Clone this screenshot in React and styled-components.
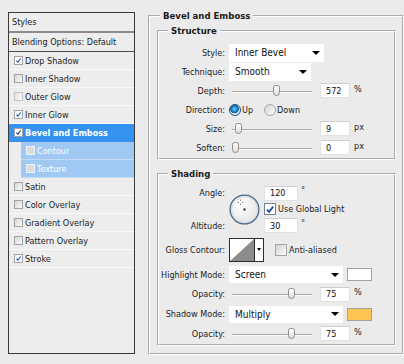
import styled, { createGlobalStyle } from "styled-components";

const GlobalStyle = createGlobalStyle`
  html, body {
    margin: 0;
    background: #ebebeb;
  }
  body {
    font-family: "DejaVu Sans Condensed", "Liberation Sans", Arial, sans-serif;
    font-size: 9px;
    color: #1c1c1c;
  }
`;

const items = [
  { name: "Drop Shadow", checked: true },
  { name: "Inner Shadow" },
  { name: "Outer Glow", faint: true },
  { name: "Inner Glow", checked: true },
  { name: "Bevel and Emboss", checked: true, selected: true },
  { name: "Contour", sub: true },
  { name: "Texture", sub: true },
  { name: "Satin" },
  { name: "Color Overlay" },
  { name: "Gradient Overlay" },
  { name: "Pattern Overlay" },
  { name: "Stroke", checked: true },
];

function Tick({ size = 9, color = "#1f4fa3", width = 1.4 }) {
  return (
    <svg width={size} height={size} viewBox="0 0 9 9">
      <path d="M1.8 4.6 L3.7 6.6 L7.3 1.9" fill="none" stroke={color} strokeWidth={width} />
    </svg>
  );
}

function Slider({ value }) {
  return (
    <Track>
      <Thumb style={{ left: `${value * 72}px` }} />
    </Track>
  );
}

function AngleDial() {
  return (
    <svg width="31" height="31" viewBox="0 0 31 31">
      <defs>
        <radialGradient id="dialFill" cx="40%" cy="35%" r="70%">
          <stop offset="0" stopColor="#ffffff" />
          <stop offset="1" stopColor="#e2e2e2" />
        </radialGradient>
      </defs>
      <circle cx="15.5" cy="15.5" r="14.4" fill="url(#dialFill)" stroke="#4d6887" strokeWidth="1.3" />
      <circle cx="15.5" cy="15.5" r="13" fill="none" stroke="#c9d3de" strokeWidth="0.8" />
      <rect x="14.5" y="14.5" width="2" height="2" fill="#111" />
      <path d="M11.5 5.5 v1.5 M11.5 9.5 v1.5 M8.5 8.5 h1.5 M13 8.5 h1.5" stroke="#8a8a8a" strokeWidth="1" />
    </svg>
  );
}

function App() {
  return (
    <>
      <GlobalStyle />
      <Page>
        <StylesPanel>
          <PanelHeader>Styles</PanelHeader>
          <BlendingRow>Blending Options: Default</BlendingRow>
          {items.map((it) => (
            <StyleItem key={it.name} $selected={it.selected} $sub={it.sub}>
              <ListBox $checked={it.checked} $sub={it.sub} $faint={it.faint}>
                {it.checked && <Tick color={it.selected ? "#16336e" : "#2456b8"} />}
              </ListBox>
              {it.name}
            </StyleItem>
          ))}
        </StylesPanel>

        <OuterGroup>
          <GroupTitle>Bevel and Emboss</GroupTitle>
          <InnerGroup>
            <GroupTitle $inner>Structure</GroupTitle>
            <FormRow>
              <Label>Style:</Label>
              <Controls>
                <Select $w={95}>
                  Inner Bevel
                  <Arrow />
                </Select>
              </Controls>
            </FormRow>
            <FormRow>
              <Label>Technique:</Label>
              <Controls>
                <Select $w={82}>
                  Smooth
                  <Arrow />
                </Select>
              </Controls>
            </FormRow>
            <FormRow>
              <Label>Depth:</Label>
              <Controls>
                <Slider value={0.57} />
                <NumberBox>572</NumberBox>
                <Unit>%</Unit>
              </Controls>
            </FormRow>
            <FormRow>
              <Label>Direction:</Label>
              <Controls>
                <RadioOption>
                  <Radio $on />
                  Up
                </RadioOption>
                <RadioOption>
                  <Radio />
                  Down
                </RadioOption>
              </Controls>
            </FormRow>
            <FormRow>
              <Label>Size:</Label>
              <Controls>
                <Slider value={0.04} />
                <NumberBox>9</NumberBox>
                <Unit>px</Unit>
              </Controls>
            </FormRow>
            <FormRow>
              <Label>Soften:</Label>
              <Controls>
                <Slider value={0} />
                <NumberBox>0</NumberBox>
                <Unit>px</Unit>
              </Controls>
            </FormRow>
          </InnerGroup>

          <InnerGroup $shading>
            <GroupTitle $inner>Shading</GroupTitle>
            <AngleBlock>
              <Cell $row="1" $col="1">
                <Label>Angle:</Label>
              </Cell>
              <Cell $row="1 / 4" $col="2">
                <AngleDial />
              </Cell>
              <Cell $row="1" $col="3">
                <NumberBox $w={34}>120</NumberBox>
                <Degree>°</Degree>
              </Cell>
              <Cell $row="2" $col="3">
                <CheckOption>
                  <Box $checked>
                    <Tick size={11} color="#2246a8" width={1.6} />
                  </Box>
                  Use Global Light
                </CheckOption>
              </Cell>
              <Cell $row="3" $col="1">
                <Label>Altitude:</Label>
              </Cell>
              <Cell $row="3" $col="3">
                <NumberBox $w={34}>30</NumberBox>
                <Degree>°</Degree>
              </Cell>
            </AngleBlock>
            <FormRow $h={31}>
              <Label>Gloss Contour:</Label>
              <Controls>
                <ContourPicker>
                  <ContourThumb>
                    <svg width="24" height="22" viewBox="0 0 24 22">
                      <polygon points="0,22 24,0 24,22" fill="#8c8c8c" />
                    </svg>
                  </ContourThumb>
                  <ContourDrop>
                    <SmallArrow />
                  </ContourDrop>
                </ContourPicker>
                <CheckOption $ml={11}>
                  <Box />
                  Anti-aliased
                </CheckOption>
              </Controls>
            </FormRow>
            <FormRow>
              <Label>Highlight Mode:</Label>
              <Controls>
                <Select $w={114} $h={17}>
                  Screen
                  <Arrow />
                </Select>
                <Swatch $color="#ffffff" />
              </Controls>
            </FormRow>
            <FormRow $h={20}>
              <Label>Opacity:</Label>
              <Controls>
                <Slider value={0.78} />
                <NumberBox>75</NumberBox>
                <Unit>%</Unit>
              </Controls>
            </FormRow>
            <FormRow $h={20}>
              <Label>Shadow Mode:</Label>
              <Controls>
                <Select $w={114} $h={17}>
                  Multiply
                  <Arrow />
                </Select>
                <Swatch $color="#ffc553" />
              </Controls>
            </FormRow>
            <FormRow>
              <Label>Opacity:</Label>
              <Controls>
                <Slider value={0.78} />
                <NumberBox>75</NumberBox>
                <Unit>%</Unit>
              </Controls>
            </FormRow>
          </InnerGroup>
        </OuterGroup>
      </Page>
    </>
  );
}

const Page = styled.div`
  width: 404px;
  height: 364px;
  box-sizing: border-box;
  padding: 10px 0 0 8px;
  display: flex;
  align-items: flex-start;
  gap: 13px;
`;

const StylesPanel = styled.div`
  margin-top: 2px;
  width: 127px;
  height: 342px;
  box-sizing: border-box;
  border: 1px solid #3a3a3a;
  background: #ededed;
  display: flex;
  flex-direction: column;
`;

const PanelHeader = styled.div`
  height: 18px;
  padding-left: 3px;
  display: flex;
  align-items: center;
  border-bottom: 2px solid #8b8b8b;
`;

const BlendingRow = styled.div`
  height: 18px;
  padding-left: 3px;
  display: flex;
  align-items: center;
  border-bottom: 1px solid #4b4b4b;
`;

const StyleItem = styled.div`
  height: 17px;
  margin-left: ${(p) => (p.$sub ? "12px" : "0")};
  padding-left: 5px;
  display: flex;
  align-items: center;
  gap: 2px;
  border-bottom: 1px solid
    ${(p) => (p.$selected ? "#3592ee" : p.$sub ? "#c3dcf6" : "#f9f9f9")};
  background: ${(p) => (p.$selected ? "#3592ee" : p.$sub ? "#9fc8f2" : "transparent")};
  color: ${(p) => (p.$selected || p.$sub ? "#ffffff" : "#1c1c1c")};
  font-weight: ${(p) => (p.$selected ? "bold" : "normal")};
`;

const ListBox = styled.span`
  flex: none;
  width: 9px;
  height: 9px;
  box-sizing: border-box;
  display: flex;
  align-items: center;
  justify-content: center;
  border: 1px solid ${(p) => (p.$sub ? "#eef4fb" : p.$faint ? "#c4c4c4" : "#a3a3a3")};
  background: ${(p) =>
    p.$checked
      ? "#ffffff"
      : p.$sub
      ? "#dcdcdc"
      : p.$faint
      ? "linear-gradient(135deg, #e2e2e2, #fbfbfb)"
      : "linear-gradient(135deg, #d6d6d6, #fbfbfb)"};
  svg {
    display: block;
  }
`;

const OuterGroup = styled.fieldset`
  margin: 0;
  min-width: 0;
  width: 256px;
  height: 345px;
  box-sizing: border-box;
  border: 2px groove #ffffff;
  padding: 3px 6px 0 7px;
`;

const InnerGroup = styled.fieldset`
  margin: ${(p) => (p.$shading ? "8px 0 0" : "0")};
  min-width: 0;
  box-sizing: border-box;
  border: 2px groove #ffffff;
  padding: ${(p) => (p.$shading ? "5px 0 1px 0" : "6px 0 1px 0")};
`;

const GroupTitle = styled.legend`
  padding: 0 3px;
  margin-left: ${(p) => (p.$inner ? "9px" : "3px")};
  font-weight: bold;
  font-size: 9.5px;
  line-height: 12px;
  color: #1a1a1a;
`;

const FormRow = styled.div`
  display: grid;
  grid-template-columns: 66px auto;
  column-gap: 4px;
  align-items: center;
  height: ${(p) => p.$h || 19}px;
`;

const Label = styled.span`
  text-align: right;
  white-space: nowrap;
`;

const Controls = styled.div`
  display: flex;
  align-items: center;
`;

const Select = styled.div`
  width: ${(p) => p.$w}px;
  height: ${(p) => p.$h || 18}px;
  box-sizing: border-box;
  padding: 0 4px 0 6px;
  background: #ffffff;
  display: flex;
  align-items: center;
  justify-content: space-between;
  font-size: 10px;
  color: #111;
`;

const Arrow = styled.span`
  width: 0;
  height: 0;
  border-left: 4px solid transparent;
  border-right: 4px solid transparent;
  border-top: 4px solid #000;
`;

const Track = styled.div`
  position: relative;
  margin-left: 3px;
  width: 80px;
  height: 12px;
  &::before {
    content: "";
    position: absolute;
    left: 0;
    right: 0;
    top: 6px;
    height: 1px;
    background: #a9a9a9;
    box-shadow: 0 1px 0 #fafafa;
  }
`;

const Thumb = styled.span`
  position: absolute;
  top: 0;
  width: 7px;
  height: 11px;
  box-sizing: border-box;
  border: 1px solid #8c8c8c;
  border-radius: 3px 3px 4px 4px;
  background: linear-gradient(#ffffff, #dedede);
`;

const NumberBox = styled.div`
  margin-left: 8px;
  width: ${(p) => p.$w || 30}px;
  height: 15px;
  box-sizing: border-box;
  padding-left: 5px;
  display: flex;
  align-items: center;
  background: #ffffff;
  border: 1px solid #e1e1e1;
  border-top-color: #cfcfcf;
  color: #111;
`;

const Unit = styled.span`
  margin-left: 4px;
  margin-top: -4px;
`;

const Degree = styled.span`
  margin-left: 3px;
  margin-top: -6px;
`;

const RadioOption = styled.span`
  display: flex;
  align-items: center;
  gap: 1px;
  margin-right: 11px;
`;

const Radio = styled.span`
  width: 12px;
  height: 12px;
  box-sizing: border-box;
  border-radius: 50%;
  border: 1px solid ${(p) => (p.$on ? "#1e4f7c" : "#a9a9a9")};
  background: ${(p) =>
    p.$on
      ? "radial-gradient(circle at 45% 40%, #7fd2ff 0, #1d8fd6 2.5px, #0f5d99 4px, #dbe8f2 4.6px)"
      : "linear-gradient(135deg, #d4d4d4, #fdfdfd)"};
`;

const AngleBlock = styled.div`
  display: grid;
  grid-template-columns: 66px 31px auto;
  grid-template-rows: 16px 16px 17px;
  column-gap: 4px;
  align-items: center;
`;

const Cell = styled.div`
  grid-row: ${(p) => p.$row};
  grid-column: ${(p) => p.$col};
  display: flex;
  align-items: center;
  justify-content: ${(p) => (p.$col === "1" ? "flex-end" : "flex-start")};
  ${NumberBox} {
    margin-left: 0;
  }
  svg {
    display: block;
  }
`;

const CheckOption = styled.span`
  display: flex;
  align-items: center;
  gap: 2px;
  margin-left: ${(p) => p.$ml || 0}px;
`;

const Box = styled.span`
  width: 12px;
  height: 12px;
  box-sizing: border-box;
  display: flex;
  align-items: center;
  justify-content: center;
  border: 1px solid ${(p) => (p.$checked ? "#6f839a" : "#a5a5a5")};
  background: ${(p) =>
    p.$checked ? "#ffffff" : "linear-gradient(135deg, #d2d2d2, #fafafa)"};
`;

const ContourPicker = styled.div`
  width: 35px;
  height: 24px;
  box-sizing: border-box;
  border: 1px solid #2c2c2c;
  display: flex;
  background: #ffffff;
`;

const ContourThumb = styled.div`
  width: 24px;
  svg {
    display: block;
  }
`;

const ContourDrop = styled.div`
  flex: 1;
  border-left: 1px solid #2c2c2c;
  display: flex;
  align-items: center;
  justify-content: center;
`;

const SmallArrow = styled.span`
  width: 0;
  height: 0;
  border-left: 2px solid transparent;
  border-right: 2px solid transparent;
  border-top: 3px solid #000;
`;

const Swatch = styled.span`
  margin-left: 4px;
  width: 25px;
  height: 13px;
  box-sizing: border-box;
  border: 1px solid #a3a3a3;
  background: ${(p) => p.$color};
`;

export default App;
